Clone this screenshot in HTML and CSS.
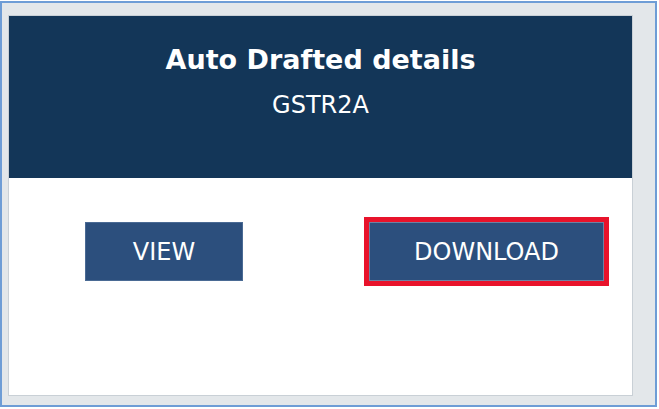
FILE: index.html
```html
<!DOCTYPE html>
<html>
<head>
<meta charset="utf-8">
<link rel="stylesheet" href="styles.css">
</head>
<body>
<div class="frame">
  <div class="panel">
    <div class="header">
      <div class="title">Auto Drafted details</div>
      <div class="subtitle">GSTR2A</div>
    </div>
    <div class="actions">
      <button class="btn btn-view">VIEW</button>
      <button class="btn btn-download">DOWNLOAD</button>
    </div>
  </div>
</div>
</body>
</html>
```
FILE: styles.css
```css
html, body {
  margin: 0;
  padding: 0;
  background: #ffffff;
}
body {
  font-family: "DejaVu Sans", Verdana, sans-serif;
}
.frame {
  box-sizing: border-box;
  margin-top: 1px;
  width: 657px;
  height: 406px;
  border: 2px solid #6e9dd6;
  background: #e3e7ea;
  padding: 12px 22px 9px 6px;
}
.panel {
  box-sizing: border-box;
  width: 625px;
  height: 381px;
  border: 1px solid #c9d0d6;
  background: #ffffff;
  display: flex;
  flex-direction: column;
}
.header {
  box-sizing: border-box;
  height: 162px;
  background: #133658;
  color: #ffffff;
  text-align: center;
  padding-top: 28px;
}
.title {
  font-weight: bold;
  font-size: 27px;
  line-height: 32px;
}
.subtitle {
  font-size: 24px;
  line-height: 28px;
  margin-top: 15px;
}
.actions {
  display: flex;
  align-items: center;
  padding-top: 39px;
}
.btn {
  font-family: "DejaVu Sans", Verdana, sans-serif;
  font-size: 24px;
  color: #ffffff;
  background: #2c4f7d;
  border: 1px solid #4a6a94;
  display: flex;
  align-items: center;
  justify-content: center;
  padding: 0;
  box-sizing: border-box;
}
.btn-view {
  width: 158px;
  height: 59px;
  margin-left: 76px;
}
.btn-download {
  width: 245px;
  height: 69px;
  margin-left: 121px;
  border: 5px solid #e8132b;
  box-shadow: inset 0 0 0 1px #6d82a3;
}
```
